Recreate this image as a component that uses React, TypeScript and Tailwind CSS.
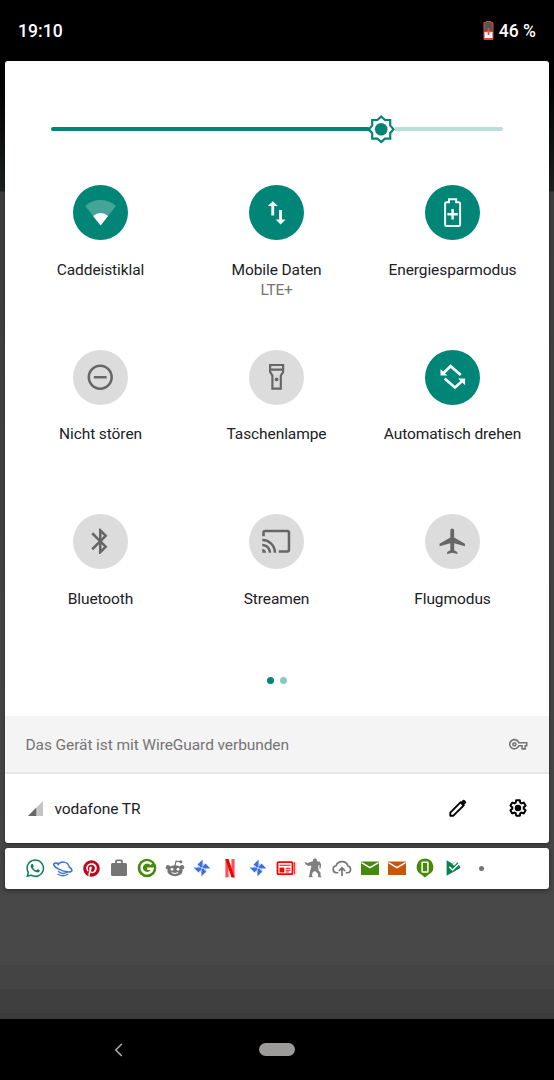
import type { ReactNode } from "react";
import { FaWhatsapp, FaPinterest } from "react-icons/fa";
import {
  MdAirplanemodeActive,
  MdBluetooth,
  MdCast,
  MdOutlineVpnKey,
  MdRemoveCircleOutline,
} from "react-icons/md";

function Glyph({ children }: { children: ReactNode }) {
  return (
    <svg className="size-[30px] overflow-visible" viewBox="0.4 0.2 30 30" fill="none">
      {children}
    </svg>
  );
}

function WifiIcon() {
  return (
    <Glyph>
      <path d="M-.4 8.1Q6.5 2.3 15 2.3T30.4 8.1L15 27.6z" fill="#45a499" />
      <path d="M7.5 18.1Q10.8 15.3 15 15.3t7.5 2.8L15 27.6z" fill="#fff" />
    </Glyph>
  );
}

function DataIcon() {
  return (
    <Glyph>
      <path d="M11.2 3.4l5 4.9h-3.6v9.4H9.7V8.3H6.2zM19 26.6l-5-4.9h3.5v-9.4h2.9v9.4H24z" fill="#f5fafa" />
    </Glyph>
  );
}

function BatteryIcon() {
  return (
    <Glyph>
      <path
        d="M11.4 4.4V1.4h7.2v3h2.400q1.500 0 1.500 1.500v20.700q0 1.500-1.500 1.500H9q-1.500 0-1.500-1.500V5.900q0-1.500 1.500-1.500z"
        stroke="#f5fafa"
        strokeWidth="2"
      />
      <path d="M15 11.300v10.400M9.800 16.500h10.400" stroke="#f5fafa" strokeWidth="2.500" />
    </Glyph>
  );
}

function FlashlightIcon() {
  return (
    <Glyph>
      <path d="M8.500 3.200h13v7l-2.300 3.600V26.800h-8.400V13.800L8.500 10.200zM8.500 7.800h13" stroke="#666" strokeWidth="2.200" />
      <circle cx="15" cy="17.600" r="1.900" fill="#666" />
    </Glyph>
  );
}

function RotateIcon() {
  return (
    <Glyph>
      <path d="M23.200 13.300L13 4.400 6 11.200M7 16.700l10.400 9 7.200-6.500" stroke="#f5fafa" strokeWidth="2.700" />
      <path d="M2.900 7.200v6.600h7zM27.500 23.400v-6.600h-7z" fill="#f5fafa" />
    </Glyph>
  );
}

type Tile = { label: string; sub?: string; on?: boolean; icon: ReactNode };

const tiles: Tile[] = [
  { label: "Caddeistiklal", on: true, icon: <WifiIcon /> },
  { label: "Mobile Daten", sub: "LTE+", on: true, icon: <DataIcon /> },
  { label: "Energiesparmodus", on: true, icon: <BatteryIcon /> },
  { label: "Nicht stören", icon: <MdRemoveCircleOutline size={30.5} /> },
  { label: "Taschenlampe", icon: <FlashlightIcon /> },
  { label: "Automatisch drehen", on: true, icon: <RotateIcon /> },
  { label: "Bluetooth", icon: <MdBluetooth size={30.5} /> },
  { label: "Streamen", icon: <MdCast size={30.5} /> },
  { label: "Flugmodus", icon: <MdAirplanemodeActive size={30.5} /> },
];

function QuickTile({ label, sub, on, icon }: Tile) {
  return (
    <div className="flex h-[164.5px] flex-col items-center">
      <div
        className={
          on
            ? "flex size-[55px] items-center justify-center rounded-full bg-[#008577] text-white"
            : "flex size-[55px] items-center justify-center rounded-full bg-[#dcdcdc] text-[#666]"
        }
      >
        {icon}
      </div>
      <div className="mt-[19.600px] whitespace-nowrap text-[15.5px] leading-5 tracking-[-0.09px] text-[#202124]">{label}</div>
      {sub && <div className="text-[15.5px] leading-[21px] tracking-[-0.3px] text-[#757575]">{sub}</div>}
    </div>
  );
}

function Brightness() {
  return (
    <div className="mt-[54px] ml-[46px] flex h-[28px] w-[452px] items-center">
      <div className="h-1 w-[316.500px] rounded-l-full bg-[#008577]" />
      <svg className="h-[29px] w-[27px] shrink-0" viewBox="-13.200 -14.300 27 29" fill="none">
        <path d="M-13.500 0h3" stroke="#008577" strokeWidth="4" />
        <path
          d="M0-12.800L3.800-9.300H9v5.400L12.300 0 9 3.900v5.400H3.800L0 12.800-3.800 9.300H-9V3.900L-12.300 0-9-3.900v-5.400h5.200z"
          fill="#fff"
          stroke="#008577"
          strokeWidth="2.200"
        />
        <circle r="6.300" fill="#008577" />
      </svg>
      <div className="h-1 grow rounded-r-full bg-[#b9dedb]" />
    </div>
  );
}

function Small({ children }: { children: ReactNode }) {
  return (
    <svg className="size-5 overflow-visible" viewBox="0 0 20 20" fill="none">
      {children}
    </svg>
  );
}

function Planet() {
  return (
    <Small>
      <path d="M4.600 7.300A6.300 6.300 0 0 1 16.300 9.200M5.200 13.300c2.600 2.900 7.300 2.900 9.800.3M4.600 16c3 2.200 7.600 2.300 10.700 0" stroke="#3f73df" strokeWidth="1.400" />
      <path d="M5.500 5.400C2 4.600.2 5.500.9 7.100c1 2.500 7.500 6 13 6.700 3.800.5 5.800-.5 4.700-2.400-.4-.8-1.300-1.600-2.600-2.400" stroke="#3f73df" strokeWidth="1.600" />
    </Small>
  );
}

function Briefcase() {
  return (
    <Small>
      <path d="M7 5.500V3.200q0-.9.900-.9h4.200q.9 0 .9.900v2.300" stroke="#757575" strokeWidth="1.800" />
      <rect x="2" y="5" width="16" height="13" rx="1.500" fill="#757575" />
    </Small>
  );
}

function GBadge() {
  return (
    <Small>
      <circle cx="10" cy="10" r="9.300" fill="#468a0c" />
      <path d="M14.400 6.300A5.500 5.500 0 1 0 15.500 10.800H10.200" stroke="#fff" strokeWidth="2.600" />
    </Small>
  );
}

function Reddit() {
  return (
    <Small>
      <path d="M10 8l1-4.800 4 .5" stroke="#757575" strokeWidth="1.200" />
      <circle cx="15.800" cy="3.700" r="1.500" fill="#757575" />
      <circle cx="3" cy="9.200" r="2.200" fill="#757575" />
      <circle cx="17" cy="9.200" r="2.200" fill="#757575" />
      <ellipse cx="10" cy="12.700" rx="7.700" ry="5.500" fill="#757575" />
      <circle cx="7" cy="11.300" r="1.400" fill="#fff" />
      <circle cx="13" cy="11.300" r="1.400" fill="#fff" />
      <path d="M6.800 14.600q3.200 2 6.400 0" stroke="#fff" strokeWidth="1" />
    </Small>
  );
}

function Pinwheel() {
  return (
    <Small>
      {[0, 90, 180, 270].map((angle) => (
        <g key={angle} transform={`rotate(${angle} 10 10)`}>
          <path d="M10.600 1.800V9.300H8.500L5.500 6.400z" fill="#3f6fdc" />
          <path d="M5.700 6.600L8.500 9.300H5.900z" fill="#b9ccf6" />
        </g>
      ))}
    </Small>
  );
}

function Netflix() {
  return (
    <Small>
      <path d="M5.400 1h3.200v18.200l-3.200.3zM11.400 1h3.200v18.500l-3.200-.3z" fill="#f65257" />
      <path d="M5.400 1h3.200l6 18.500-3.200-.3z" fill="#f00000" />
    </Small>
  );
}

function News() {
  return (
    <Small>
      <rect x="1.500" y="4.200" width="15" height="12" rx="1" stroke="#f00" strokeWidth="1.800" />
      <path d="M3.500 7.300h11M9.800 10.200h4.700M9.800 12.200h4.700M9.800 14h3" stroke="#f00" strokeWidth="1.100" />
      <path d="M3.500 9.600h4.800v4.900H3.500z" fill="#f00" />
      <path d="M18.400 4v12.500" stroke="#f33" strokeWidth="1.100" />
      <path d="M19.900 5v11" stroke="#faa" strokeWidth=".8" />
    </Small>
  );
}

function Warrior() {
  return (
    <Small>
      <path
        d="M5.500 4.200L8.800 3.200 9 1.200l2.300-.9 1.700 1.200v1.700l2.900.5 1.300 3-.6 3.800-1.300.3.200-3.500-1-.3-.4 3 .7 2.800 1.700 1.800.2 3.300 1.300 1.400h-3.700l-.5-3.800-2.700-2.500-2.300 1.300-.8 2.900.8 2.100H4.500l.9-2.300.6-4.200 1.300-3.200-.4-2.200-2.600.6-2.400-1.600L1 5.200.5 3.900 3.600 5z"
        fill="#808080"
      />
    </Small>
  );
}

function CloudUpload() {
  return (
    <Small>
      <path d="M6.300 14.800H4.300a3.600 3.600 0 0 1-.3-7.100A6.400 6.400 0 0 1 16 8 3.500 3.500 0 0 1 15.900 14.800h-2.200" stroke="#757575" strokeWidth="1.600" />
      <path d="M10 18v-7.500M6.800 13L10 9.800l3.200 3.200" stroke="#757575" strokeWidth="1.700" />
    </Small>
  );
}

function Mail({ fill }: { fill: string }) {
  return (
    <Small>
      <rect x="1" y="3.600" width="18" height="13.400" rx=".5" fill={fill} />
      <path d="M1.500 4.700L10 9.700l8.500-5" stroke="#fff" strokeWidth="1.400" />
    </Small>
  );
}

function PhonePin() {
  return (
    <Small>
      <path d="M10 .6a8.400 8.400 0 0 1 3.700 15.900L10 19.600l-3.700-3.100A8.400 8.400 0 0 1 10 .6z" fill="#468a0c" />
      <rect x="7.100" y="4.200" width="5.800" height="9.800" rx=".6" stroke="#fff" strokeWidth="1.500" />
    </Small>
  );
}

function PlayCheck() {
  return (
    <Small>
      <path d="M3.600 2.300L10 6l3.700-3.200 2 3 1.700 4.300L3.600 17.700z" fill="#0b8053" />
      <path d="M9.500 6.500l4.800-4.200.7 1.500-3.800 4z" fill="#fff" />
      <path d="M6.300 8.800L9.500 12l7-6.800" stroke="#fff" strokeWidth="1.400" />
    </Small>
  );
}

function PencilIcon() {
  return (
    <svg className="size-[18px]" viewBox="0 0 18 18" fill="none">
      <path d="M1.300 13.600L11.700 3.200l3.100 3.100L4.400 16.700H1.300z" stroke="#000" strokeWidth="1.900" strokeLinejoin="round" />
      <path d="M11 4l2.900-2.900q.8-.7 1.600 0l1.400 1.400q.8.800 0 1.600L14 7z" fill="#000" />
    </svg>
  );
}

function GearIcon() {
  return (
    <svg className="ml-[41.500px] size-[20px]" viewBox="1.200 1.200 21.600 21.600" fill="none">
      <path
        d="M19.140 12.940c.04-.3.060-.61.060-.94 0-.32-.02-.64-.07-.94l2.030-1.580c.18-.14.230-.41.120-.61l-1.920-3.320c-.12-.22-.37-.29-.59-.22l-2.390.96c-.5-.38-1.030-.7-1.620-.94L14.400 2.810c-.04-.24-.24-.41-.48-.41h-3.840c-.24 0-.43.17-.47.41L9.250 5.350C8.660 5.590 8.120 5.920 7.630 6.290L5.240 5.330c-.22-.08-.47 0-.59.22L2.740 8.870c-.12.210-.08.470.12.610l2.030 1.580C4.840 11.360 4.800 11.690 4.800 12s.02.640.07.940l-2.030 1.580c-.18.140-.23.410-.12.610l1.920 3.320c.12.220.37.290.59.220l2.390-.96c.5.380 1.030.7 1.620.94l.36 2.540c.05.240.24.410.48.410h3.840c.24 0 .44-.17.470-.41l.36-2.540c.59-.24 1.130-.56 1.620-.94l2.390.96c.22.080.47 0 .59-.22l1.920-3.320c.12-.22.070-.47-.12-.61z"
        transform="translate(12 12) scale(.87) translate(-12 -12)"
        stroke="#000"
        strokeWidth="2.500"
      />
      <circle cx="12" cy="12" r="3.500" fill="#000" />
    </svg>
  );
}

const notifications: ReactNode[] = [
  <FaWhatsapp size={20.5} color="#0b8053" />,
  <Planet />,
  <FaPinterest size={17} color="#bd081c" />,
  <Briefcase />,
  <GBadge />,
  <Reddit />,
  <Pinwheel />,
  <Netflix />,
  <Pinwheel />,
  <News />,
  <Warrior />,
  <CloudUpload />,
  <Mail fill="#468a0c" />,
  <Mail fill="#c8560f" />,
  <PhonePin />,
  <PlayCheck />,
  <span className="size-[5px] rounded-full bg-[#757575]" />,
];

export default function App() {
  return (
    <div className="flex h-[1080px] w-[554px] flex-col overflow-hidden bg-[linear-gradient(#000_0,#000_85px,#1c2120_191px,#3c3c3c_192px,#414141_500px,#444_830px,#484848_900px,#484848_965px,#444_965px,#444_989px,#3f3f3f_989px,#3f3f3f_1013px,#3b3b3b_1013px)] font-[Roboto,sans-serif]">
      <header className="flex h-[61px] shrink-0 items-center justify-between bg-black px-[18px] pt-px text-[17.5px] font-medium text-white">
        <span className="tracking-[0.1px]">19:10</span>
        <span className="flex items-center gap-[5px]">
          <svg className="mb-px h-[19px] w-[11px]" viewBox="0 0 11 19">
            <path d="M3.200 1.800V.5h4.600v1.300H10v16.500H1V1.800z" fill="#555" stroke="#e64a2e" />
            <path d="M1.500 11h8v6h-8z" fill="#fff" />
            <path d="M1 18h9" stroke="#f4511e" strokeWidth="1.500" />
            <path d="M5.500 7v7M2.500 10.500h6" stroke="#f04a38" strokeWidth="1.700" />
          </svg>
          <span>46 %</span>
        </span>
      </header>

      <main className="mx-[5px] flex h-[782.300px] shrink-0 flex-col overflow-hidden rounded-[3px] bg-white shadow-[0_1px_3px_rgba(0,0,0,0.4)]">
        <Brightness />
        <div className="mt-[42px] ml-[7.500px] grid h-[491.500px] w-[528px] grid-cols-3">
          {tiles.map((tile) => (
            <QuickTile key={tile.label} {...tile} />
          ))}
        </div>
        <div className="flex h-[39.500px] shrink-0 items-start justify-center gap-[5.500px] pt-[0.500px]">
          <span className="size-[7px] shrink-0 rounded-full bg-[#008577]" />
          <span className="size-[7px] shrink-0 rounded-full bg-[#8cc8c2]" />
        </div>
        <div className="flex h-[57.500px] shrink-0 items-center justify-between border-b-2 border-[#e6e6e6] bg-[#f4f4f4] pt-px pr-[21.500px] pl-[20.500px] text-[15.5px] tracking-[-0.09px] text-[#757575]">
          <span className="pt-[3px]">Das Gerät ist mit WireGuard verbunden</span>
          <MdOutlineVpnKey size={18.5} />
        </div>
        <div className="flex grow items-center pr-[21px] pl-[23px] text-[#202124]">
          <svg className="h-[15px] w-[15px]" viewBox="0 0 15 15">
            <path d="M15 0v15H0z" fill="#c4c4c4" />
            <path d="M8.200 6.800V15H0z" fill="#666" />
          </svg>
          <span className="ml-[11.500px] grow pt-[2px] text-[15.5px] tracking-[-0.08px]">vodafone TR</span>
          <PencilIcon />
          <GearIcon />
        </div>
      </main>

      <section className="mx-[5px] mt-[4.700px] flex h-[41px] shrink-0 items-center rounded-[3px] bg-white pl-[16.400px] shadow-[0_1px_4px_rgba(0,0,0,0.5)]">
        {notifications.map((icon, index) => (
          <div key={index} className="flex w-[27.870px] shrink-0 items-center justify-center">
            {icon}
          </div>
        ))}
      </section>

      <nav className="mt-auto flex h-[61px] shrink-0 items-center bg-black pl-[114px]">
        <svg className="h-[14px] w-[9px]" viewBox="0 0 9 14" fill="none">
          <path d="M7.800 1L1.800 7l6 6" stroke="#aaa" strokeWidth="1.600" />
        </svg>
        <span className="ml-[136px] h-[13px] w-9 rounded-full bg-[#9c9b99]" />
      </nav>
    </div>
  );
}
